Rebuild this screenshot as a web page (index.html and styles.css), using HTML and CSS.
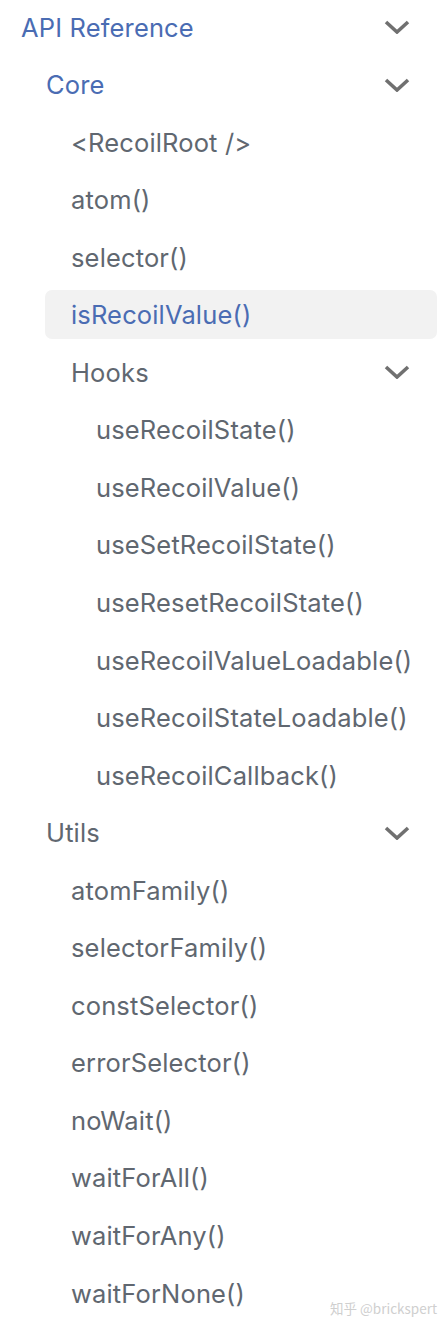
FILE: index.html
```html
<!DOCTYPE html>
<html lang="en">
<head>
<meta charset="utf-8">
<link rel="stylesheet" href="styles.css">
</head>
<body>
<nav class="sidebar">
  <ul class="menu">
    <li>
      <div class="row cat active-cat"><span>API Reference</span><svg class="chev" viewBox="0 0 26 14"><path d="M2 2 L13 12 L24 2"/></svg></div>
      <ul class="menu sub">
        <li>
          <div class="row cat active-cat"><span>Core</span><svg class="chev" viewBox="0 0 26 14"><path d="M2 2 L13 12 L24 2"/></svg></div>
          <ul class="menu sub">
            <li><div class="row">&lt;RecoilRoot /&gt;</div></li>
            <li><div class="row">atom()</div></li>
            <li><div class="row">selector()</div></li>
            <li><div class="row active">isRecoilValue()</div></li>
            <li>
              <div class="row cat"><span>Hooks</span><svg class="chev" viewBox="0 0 26 14"><path d="M2 2 L13 12 L24 2"/></svg></div>
              <ul class="menu sub">
                <li><div class="row">useRecoilState()</div></li>
                <li><div class="row">useRecoilValue()</div></li>
                <li><div class="row">useSetRecoilState()</div></li>
                <li><div class="row">useResetRecoilState()</div></li>
                <li><div class="row">useRecoilValueLoadable()</div></li>
                <li><div class="row">useRecoilStateLoadable()</div></li>
                <li><div class="row">useRecoilCallback()</div></li>
              </ul>
            </li>
          </ul>
        </li>
        <li>
          <div class="row cat"><span>Utils</span><svg class="chev" viewBox="0 0 26 14"><path d="M2 2 L13 12 L24 2"/></svg></div>
          <ul class="menu sub">
            <li><div class="row">atomFamily()</div></li>
            <li><div class="row">selectorFamily()</div></li>
            <li><div class="row">constSelector()</div></li>
            <li><div class="row">errorSelector()</div></li>
            <li><div class="row">noWait()</div></li>
            <li><div class="row">waitForAll()</div></li>
            <li><div class="row">waitForAny()</div></li>
            <li><div class="row">waitForNone()</div></li>
          </ul>
        </li>
      </ul>
    </li>
  </ul>
</nav>
<div class="watermark">知乎 @brickspert</div>
</body>
</html>
```

FILE: styles.css
```css
html, body {
  margin: 0;
  padding: 0;
  background: #ffffff;
}
body {
  width: 448px;
  height: 1328px;
  overflow: hidden;
  position: relative;
  font-family: Inter, "Noto Sans", "Liberation Sans", sans-serif;
}
.sidebar {
  margin: 2.5px 11px 0 -5px;
}
.menu {
  list-style: none;
  margin: 0;
  padding: 0;
}
.sub {
  padding-left: 25px;
}
.row {
  display: flex;
  align-items: center;
  justify-content: space-between;
  height: 49px;
  margin: 0 0 8.55px 0;
  padding: 0 27px 0 26px;
  border-radius: 7px;
  font-size: 25.5px;
  letter-spacing: 0.15px;
  color: #606770;
  white-space: nowrap;
}
.active-cat {
  color: #4a6cb3;
}
.active {
  color: #4a6cb3;
  background: #f2f2f2;
}
.chev {
  width: 26px;
  height: 14px;
  flex: none;
}
.chev path {
  fill: none;
  stroke: #707070;
  stroke-width: 3.6;
}
.watermark {
  position: absolute;
  right: 11px;
  top: 1298px;
  font-size: 13.5px;
  color: #cfcfcf;
  font-family: "Noto Sans CJK SC", "Noto Sans", sans-serif;
}
```
